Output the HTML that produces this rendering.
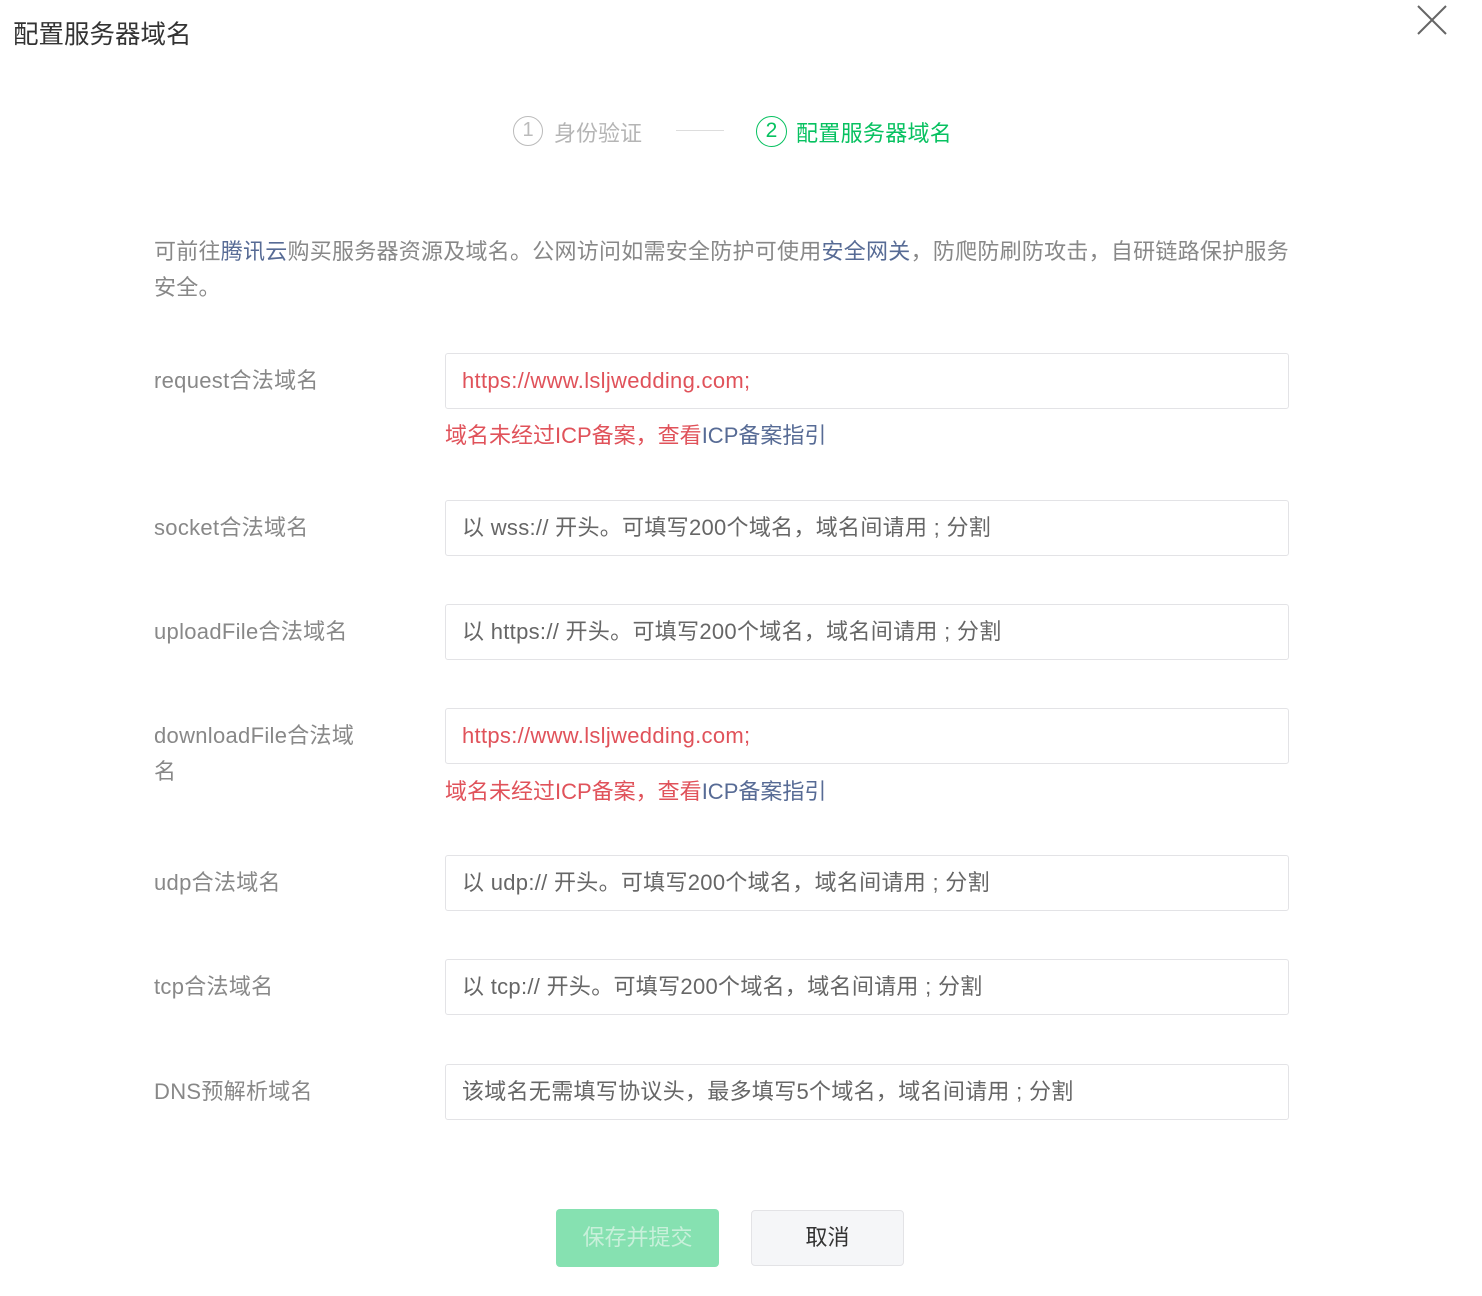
<!DOCTYPE html><html><head><meta charset="utf-8"><style>
body{margin:0;width:1482px;height:1296px;background:#fff;font-family:"Liberation Sans","Noto Sans CJK SC",sans-serif;position:relative;overflow:hidden}
.a{position:absolute;white-space:nowrap}
.t{font-size:25.5px;color:#333;left:13px;top:14px}
.lbl{font-size:22px;color:#888;left:154px;line-height:36px;letter-spacing:0.3px}
.inp{position:absolute;left:445px;height:54px;border:1px solid #e3e3e6;border-radius:3px;font-size:22px;line-height:54px;padding-left:16px;color:#666;width:826px;letter-spacing:0.3px}
.red{color:#e0525a}.blue{color:#576b95}
.err{font-size:22px;left:445px}
</style></head><body>
<div class="a t">配置服务器域名</div>
<svg class="a" style="left:1416px;top:4px" width="32" height="32"><path d="M2 2L30 30M30 2L2 30" stroke="#666" stroke-width="2"/></svg>
<div class="a" style="left:513px;top:116px;width:30px;height:30px;border:1.5px solid #bbb;border-radius:50%;box-sizing:border-box;text-align:center;line-height:27px;font-size:20px;color:#bbb">1</div>
<div class="a" style="left:554px;top:116px;font-size:22px;color:#b5b5b5">身份验证</div>
<div class="a" style="left:676px;top:130px;width:48px;height:1px;background:#ddd"></div>
<div class="a" style="left:756px;top:116px;width:31px;height:31px;border:1.5px solid #07c160;border-radius:50%;box-sizing:border-box;text-align:center;line-height:28px;font-size:21px;color:#07c160">2</div>
<div class="a" style="left:796px;top:116px;font-size:22px;color:#07c160;letter-spacing:0.3px">配置服务器域名</div>
<div class="a" style="left:154px;top:234px;font-size:22px;line-height:36px;color:#888;white-space:normal;width:1150px;letter-spacing:0.25px">可前往<span class="blue">腾讯云</span>购买服务器资源及域名。公网访问如需安全防护可使用<span class="blue">安全网关</span>，防爬防刷防攻击，自研链路保护服务安全。</div>

<div class="a lbl" style="top:363px">request合法域名</div>
<div class="inp red" style="top:353px">https://www.lsljwedding.com;</div>
<div class="a err red" style="top:418px">域名未经过ICP备案，查看<span class="blue">ICP备案指引</span></div>

<div class="a lbl" style="top:510px">socket合法域名</div>
<div class="inp" style="top:500px">以 wss:// 开头。可填写200个域名，域名间请用 ; 分割</div>

<div class="a lbl" style="top:614px">uploadFile合法域名</div>
<div class="inp" style="top:604px">以 https:// 开头。可填写200个域名，域名间请用 ; 分割</div>

<div class="a lbl" style="top:718px;white-space:normal;width:215px;word-break:break-all">downloadFile合法域名</div>
<div class="inp red" style="top:708px">https://www.lsljwedding.com;</div>
<div class="a err red" style="top:774px">域名未经过ICP备案，查看<span class="blue">ICP备案指引</span></div>

<div class="a lbl" style="top:865px">udp合法域名</div>
<div class="inp" style="top:855px">以 udp:// 开头。可填写200个域名，域名间请用 ; 分割</div>

<div class="a lbl" style="top:969px">tcp合法域名</div>
<div class="inp" style="top:959px">以 tcp:// 开头。可填写200个域名，域名间请用 ; 分割</div>

<div class="a lbl" style="top:1074px">DNS预解析域名</div>
<div class="inp" style="top:1064px">该域名无需填写协议头，最多填写5个域名，域名间请用 ; 分割</div>

<div class="a" style="left:556px;top:1209px;width:163px;height:58px;background:#86e1b1;border-radius:4px;color:#c8f0da;font-size:22px;text-align:center;line-height:58px">保存并提交</div>
<div class="a" style="left:751px;top:1210px;width:153px;height:56px;background:#f5f6f8;border:1px solid #e3e3e6;box-sizing:border-box;border-radius:4px;color:#333;font-size:22px;text-align:center;line-height:54px">取消</div>
</body></html>
